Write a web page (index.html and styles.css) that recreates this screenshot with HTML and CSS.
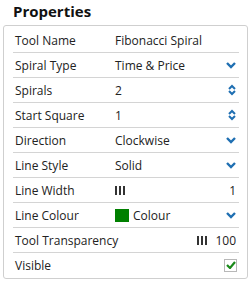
FILE: index.html
```html
<!DOCTYPE html>
<html lang="en">
<head>
<meta charset="UTF-8">
<meta name="viewport" content="width=device-width, initial-scale=1.0">
<title>Properties</title>
<link rel="stylesheet" href="styles.css">
</head>
<body>
<h2 class="title">Properties</h2>
<div class="panel">
    <div class="row">
        <span class="label">Tool Name</span>
        <span class="value">Fibonacci Spiral</span>
    </div>
    <div class="row">
        <span class="label">Spiral Type</span>
        <span class="value">Time &amp; Price</span>
        <svg class="icon" width="10" height="8" viewBox="0 0 10 8"><path d="M1 2 L5 6 L9 2" fill="none" stroke="#1f6fb2" stroke-width="2.4"/></svg>
    </div>
    <div class="row">
        <span class="label">Spirals</span>
        <span class="value">2</span>
        <svg class="icon" width="8" height="12" viewBox="0 0 8 12"><path d="M1 5 L4 2 L7 5 M1 7 L4 10 L7 7" fill="none" stroke="#1f6fb2" stroke-width="2"/></svg>
    </div>
    <div class="row">
        <span class="label">Start Square</span>
        <span class="value">1</span>
        <svg class="icon" width="8" height="12" viewBox="0 0 8 12"><path d="M1 5 L4 2 L7 5 M1 7 L4 10 L7 7" fill="none" stroke="#1f6fb2" stroke-width="2"/></svg>
    </div>
    <div class="row">
        <span class="label">Direction</span>
        <span class="value">Clockwise</span>
        <svg class="icon" width="10" height="8" viewBox="0 0 10 8"><path d="M1 2 L5 6 L9 2" fill="none" stroke="#1f6fb2" stroke-width="2.4"/></svg>
    </div>
    <div class="row">
        <span class="label">Line Style</span>
        <span class="value">Solid</span>
        <svg class="icon" width="10" height="8" viewBox="0 0 10 8"><path d="M1 2 L5 6 L9 2" fill="none" stroke="#1f6fb2" stroke-width="2.4"/></svg>
    </div>
    <div class="row">
        <span class="label">Line Width</span>
        <span class="value"><span class="grip"><i></i><i></i><i></i></span></span>
        <span class="num">1</span>
    </div>
    <div class="row">
        <span class="label">Line Colour</span>
        <span class="value"><span class="swatch"></span>Colour</span>
        <svg class="icon" width="10" height="8" viewBox="0 0 10 8"><path d="M1 2 L5 6 L9 2" fill="none" stroke="#1f6fb2" stroke-width="2.4"/></svg>
    </div>
    <div class="row">
        <span class="label">Tool Transparency</span>
        <span class="value right"><span class="grip"><i></i><i></i><i></i></span></span>
        <span class="num">100</span>
    </div>
    <div class="row last">
        <span class="label">Visible</span>
        <span class="value"></span>
        <span class="check"><svg width="10" height="8" viewBox="0 0 10 8"><path d="M1 4 L4 7 L9 1" fill="none" stroke="#1a8a1a" stroke-width="2.2"/></svg></span>
    </div>
</div>
</body>
</html>
```
FILE: styles.css
```css
body {
    margin: 0;
    padding: 0;
    background-color: #fff;
    font-family: "Open Sans", Arial, sans-serif;
    color: #222;
}

.title {
    margin: 0;
    padding: 1px 0 0 13px;
    height: 24px;
    font-size: 15px;
    font-weight: 700;
    color: #111;
}

.panel {
    margin: 0 2px 0 3px;
    width: 245px;
    height: 254px;
    box-sizing: border-box;
    border: 1px solid #cfcfcf;
    border-radius: 3px;
    padding: 2px 8px 0 9px;
}

.row {
    display: flex;
    align-items: center;
    height: 24px;
    border-bottom: 1px solid #d4d4d4;
    font-size: 12px;
    padding: 0 2px;
}

.row.last {
    border-bottom: none;
}

.label {
    width: 100px;
    white-space: nowrap;
}

.value {
    flex: 1;
    display: flex;
    align-items: center;
}

.value.right {
    justify-content: flex-end;
    padding-right: 8px;
}

.icon {
    margin-right: 1px;
}

.num {
    margin-right: 1px;
}

.grip {
    display: inline-flex;
    gap: 2px;
}

.grip i {
    display: block;
    width: 2px;
    height: 9px;
    background-color: #333;
}

.swatch {
    display: inline-block;
    width: 14px;
    height: 13px;
    background-color: #008000;
    margin-right: 4px;
}

.check {
    width: 11px;
    height: 11px;
    border: 1px solid #b8b8b8;
    display: flex;
    align-items: center;
    justify-content: center;
}
```
